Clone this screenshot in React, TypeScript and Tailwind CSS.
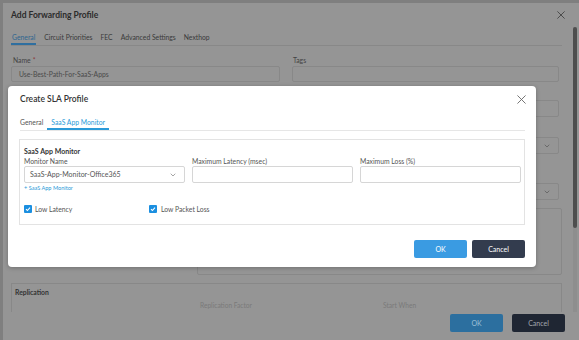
import { ChevronDown } from "lucide-react";

function CloseIcon({ size, color }: { size: number; color: string }) {
  return (
    <svg width={size} height={size} viewBox="0 0 10 10" fill="none" stroke={color} strokeWidth="1">
      <path d="M0.5 0.5 L9.5 9.5 M9.5 0.5 L0.5 9.5" />
    </svg>
  );
}

function Check() {
  return (
    <span className="flex items-center justify-center w-[8px] h-[8px] rounded-[1px] bg-[#1b8fe0]">
      <svg width="6" height="6" viewBox="0 0 6 6" fill="none" stroke="#fff" strokeWidth="1.1">
        <path d="M1 3.2 L2.4 4.5 L5 1.6" />
      </svg>
    </span>
  );
}

const outerTabs = ["General", "Circuit Priorities", "FEC", "Advanced Settings", "Nexthop"];

function SlaModal() {
  return (
    <div className="absolute left-[8px] top-[86px] w-[528px] h-[181px] bg-white rounded-[4px] shadow-[0_1px_4px_rgba(0,0,0,0.25)] flex flex-col">
      <div className="h-[27px] flex items-center justify-between pl-[12px] pr-[10px]">
        <span className="text-[8.5px] font-semibold text-[#333]">Create SLA Profile</span>
        <CloseIcon size={9} color="#666" />
      </div>
      <div className="mx-[12px] mr-[11px] h-[18px] pt-[3px] flex items-stretch border-b border-[#e6e6e6] text-[6.8px]">
        <span className="flex items-center text-[#555] border-b-2 border-transparent">General</span>
        <span className="ml-[4px] px-[4px] flex items-center text-[#2a9ad8] border-b-2 border-[#2a9ad8]">
          SaaS App Monitor
        </span>
      </div>
      <div className="mt-[8px] ml-[11px] mr-[11px] border border-[#e3e3e3] pt-[5px] pl-[4px] pr-[3px] pb-[11px]">
        <div className="h-[12px] flex items-center text-[7px] font-bold text-[#333]">SaaS App Monitor</div>
        <div className="grid grid-cols-3 gap-x-[7px]">
          {["Monitor Name", "Maximum Latency (msec)", "Maximum Loss (%)"].map((l) => (
            <div key={l} className="flex flex-col">
              <span className="h-[9px] flex items-center text-[6.8px] text-[#555]">{l}</span>
              {l === "Monitor Name" ? (
                <div className="h-[17px] border border-[#d6d6d6] rounded-[2px] flex items-center justify-between pl-[5px] pr-[7px] text-[7px] text-[#555]">
                  <span>SaaS-App-Monitor-Office365</span>
                  <ChevronDown size={8} color="#555" strokeWidth={1.6} />
                </div>
              ) : (
                <div className="h-[17px] border border-[#d6d6d6] rounded-[2px]" />
              )}
            </div>
          ))}
        </div>
        <div className="h-[10px] flex items-center text-[5.6px] text-[#2a9ad8]">+ SaaS App Monitor</div>
        <div className="mt-[12px] h-[8px] flex items-center text-[6.8px] text-[#555]">
          <div className="w-[125px] flex items-center gap-[3px]">
            <Check />
            <span>Low Latency</span>
          </div>
          <div className="flex items-center gap-[4px]">
            <Check />
            <span>Low Packet Loss</span>
          </div>
        </div>
      </div>
      <div className="mt-[15px] pr-[11px] flex justify-end gap-[5px]">
        <button className="w-[53px] h-[18px] rounded-[2px] bg-[#3a9be2] text-white text-[7px]">OK</button>
        <button className="w-[53px] h-[18px] rounded-[2px] bg-[#333c4e] text-white text-[7px]">Cancel</button>
      </div>
    </div>
  );
}

export default function App() {
  return (
    <div className="relative w-[579px] h-[340px] overflow-hidden bg-[#7f7f7f] pt-[3px] pl-[3px] font-['Lato',sans-serif]">
      <div className="h-[337px] bg-[#959595] flex flex-col">
        <div className="h-[24px] shrink-0 flex items-center justify-between pl-[8px] pr-[14px]">
          <span className="text-[8.5px] font-bold text-[#2b2b2b]">Add Forwarding Profile</span>
          <CloseIcon size={8} color="#3a3a3a" />
        </div>

        <div className="h-[285px] shrink-0 flex overflow-hidden">
          <div className="flex-1 pl-[8px] pr-[11px] flex flex-col">
            <div className="h-[19px] shrink-0 pt-[4px] flex items-stretch gap-[8px] border-b border-[#888] text-[6.8px] text-[#3a3a3a]">
              {outerTabs.map((t, i) => (
                <span
                  key={t}
                  className={
                    i === 0
                      ? "flex items-center px-[1px] text-[#2f6690] border-b-2 border-[#2f6fa0]"
                      : "flex items-center border-b-2 border-transparent"
                  }
                >
                  {t}
                </span>
              ))}
            </div>

            <div className="mt-[9px] shrink-0 flex gap-[12px]">
              <div className="w-[269px] flex flex-col">
                <span className="h-[11px] pl-[2px] flex items-center text-[6.8px] text-[#444]">
                  Name<span className="ml-[2px] text-[#8c3b3b]">*</span>
                </span>
                <div className="h-[16px] border border-[#888] rounded-[2px] flex items-center pl-[7px] text-[6.8px] text-[#4a4a4a]">
                  Use-Best-Path-For-SaaS-Apps
                </div>
              </div>
              <div className="w-[267px] flex flex-col">
                <span className="h-[11px] pl-[1px] flex items-center text-[6.8px] text-[#444]">Tags</span>
                <div className="h-[16px] border border-[#888] rounded-[2px]" />
                <div className="mt-[18px] h-[17px] border border-[#888] rounded-[2px]" />
                <div className="mt-[20px] h-[17px] border border-[#888] rounded-[2px] flex items-center justify-end pr-[7px]">
                  <ChevronDown size={8} color="#444" strokeWidth={1.6} />
                </div>
                <div className="mt-[29px] h-[17px] border border-[#888] rounded-[2px] flex items-center justify-end pr-[7px]">
                  <ChevronDown size={8} color="#444" strokeWidth={1.6} />
                </div>
              </div>
            </div>

            <div className="mt-[8px] shrink-0 ml-[186px] h-[67px] border border-[#888] rounded-[2px]" />

            <div className="mt-[8px] shrink-0 h-[40px] border-t border-l border-r border-[#888] pl-[3px] flex flex-col">
              <span className="h-[17px] shrink-0 flex items-center text-[6.8px] font-bold text-[#333]">Replication</span>
              <div className="h-[9px] shrink-0 flex items-center text-[6.6px] text-[#7a7a7a]">
                <span className="ml-[185px] w-[183px]">Replication Factor</span>
                <span>Start When</span>
              </div>
            </div>
          </div>
          <div className="w-[4px] mr-[2px] bg-[#8e8e8e] flex flex-col">
            <div className="h-[201px] bg-[#4e4e4e] rounded-[2px]" />
          </div>
        </div>

        <div className="flex-1 pt-[2px] pr-[14px] flex justify-end gap-[9px]">
          <button className="w-[53px] h-[18px] rounded-[2px] bg-[#2c6f9f] text-[#9cc0d8] text-[7px]">OK</button>
          <button className="w-[53px] h-[18px] rounded-[2px] bg-[#1f2633] text-[#a3a7ae] text-[7px]">Cancel</button>
        </div>
      </div>

      <SlaModal />
    </div>
  );
}
